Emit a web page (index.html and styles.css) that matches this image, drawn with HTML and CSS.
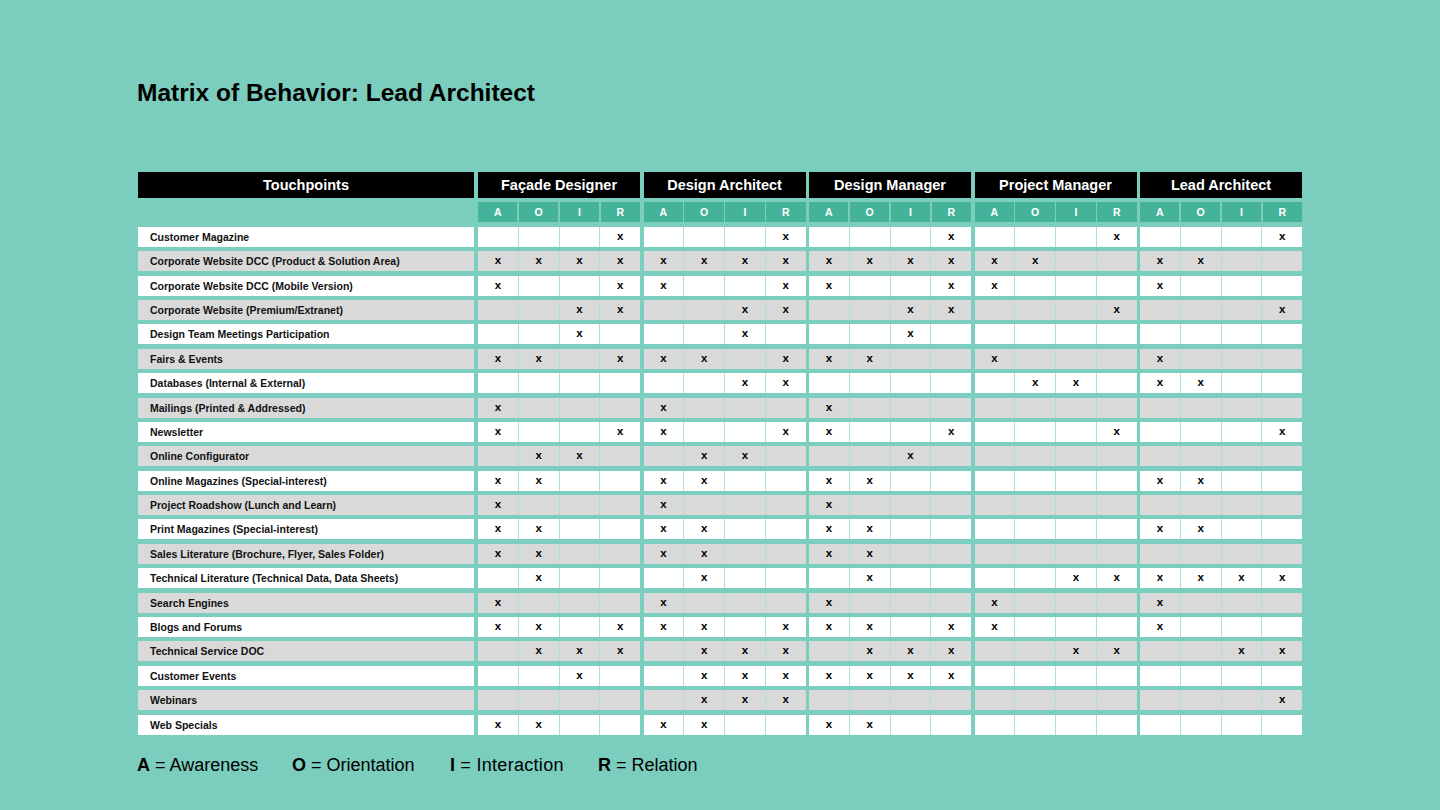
FILE: index.html
```html
<!DOCTYPE html>
<html lang="en">
<head>
<meta charset="utf-8">
<title>Matrix of Behavior: Lead Architect</title>
<link rel="stylesheet" href="styles.css">
</head>
<body>
<main class="page">
  <h1 class="title">Matrix of Behavior: Lead Architect</h1>
  <div class="matrix">
    <div class="row head">
      <div class="label">Touchpoints</div>
      <div class="group">Façade Designer</div>
      <div class="group">Design Architect</div>
      <div class="group">Design Manager</div>
      <div class="group">Project Manager</div>
      <div class="group">Lead Architect</div>
    </div>
    <div class="row sub">
      <div class="label"></div>
      <div class="group"><span>A</span><span>O</span><span>I</span><span>R</span></div>
      <div class="group"><span>A</span><span>O</span><span>I</span><span>R</span></div>
      <div class="group"><span>A</span><span>O</span><span>I</span><span>R</span></div>
      <div class="group"><span>A</span><span>O</span><span>I</span><span>R</span></div>
      <div class="group"><span>A</span><span>O</span><span>I</span><span>R</span></div>
    </div>
    <div class="row">
      <div class="label">Customer Magazine</div>
      <div class="group"><span></span><span></span><span></span><span>x</span></div>
      <div class="group"><span></span><span></span><span></span><span>x</span></div>
      <div class="group"><span></span><span></span><span></span><span>x</span></div>
      <div class="group"><span></span><span></span><span></span><span>x</span></div>
      <div class="group"><span></span><span></span><span></span><span>x</span></div>
    </div>
    <div class="row alt">
      <div class="label">Corporate Website DCC (Product &amp; Solution Area)</div>
      <div class="group"><span>x</span><span>x</span><span>x</span><span>x</span></div>
      <div class="group"><span>x</span><span>x</span><span>x</span><span>x</span></div>
      <div class="group"><span>x</span><span>x</span><span>x</span><span>x</span></div>
      <div class="group"><span>x</span><span>x</span><span></span><span></span></div>
      <div class="group"><span>x</span><span>x</span><span></span><span></span></div>
    </div>
    <div class="row">
      <div class="label">Corporate Website DCC (Mobile Version)</div>
      <div class="group"><span>x</span><span></span><span></span><span>x</span></div>
      <div class="group"><span>x</span><span></span><span></span><span>x</span></div>
      <div class="group"><span>x</span><span></span><span></span><span>x</span></div>
      <div class="group"><span>x</span><span></span><span></span><span></span></div>
      <div class="group"><span>x</span><span></span><span></span><span></span></div>
    </div>
    <div class="row alt">
      <div class="label">Corporate Website (Premium/Extranet)</div>
      <div class="group"><span></span><span></span><span>x</span><span>x</span></div>
      <div class="group"><span></span><span></span><span>x</span><span>x</span></div>
      <div class="group"><span></span><span></span><span>x</span><span>x</span></div>
      <div class="group"><span></span><span></span><span></span><span>x</span></div>
      <div class="group"><span></span><span></span><span></span><span>x</span></div>
    </div>
    <div class="row">
      <div class="label">Design Team Meetings Participation</div>
      <div class="group"><span></span><span></span><span>x</span><span></span></div>
      <div class="group"><span></span><span></span><span>x</span><span></span></div>
      <div class="group"><span></span><span></span><span>x</span><span></span></div>
      <div class="group"><span></span><span></span><span></span><span></span></div>
      <div class="group"><span></span><span></span><span></span><span></span></div>
    </div>
    <div class="row alt">
      <div class="label">Fairs &amp; Events</div>
      <div class="group"><span>x</span><span>x</span><span></span><span>x</span></div>
      <div class="group"><span>x</span><span>x</span><span></span><span>x</span></div>
      <div class="group"><span>x</span><span>x</span><span></span><span></span></div>
      <div class="group"><span>x</span><span></span><span></span><span></span></div>
      <div class="group"><span>x</span><span></span><span></span><span></span></div>
    </div>
    <div class="row">
      <div class="label">Databases (Internal &amp; External)</div>
      <div class="group"><span></span><span></span><span></span><span></span></div>
      <div class="group"><span></span><span></span><span>x</span><span>x</span></div>
      <div class="group"><span></span><span></span><span></span><span></span></div>
      <div class="group"><span></span><span>x</span><span>x</span><span></span></div>
      <div class="group"><span>x</span><span>x</span><span></span><span></span></div>
    </div>
    <div class="row alt">
      <div class="label">Mailings (Printed &amp; Addressed)</div>
      <div class="group"><span>x</span><span></span><span></span><span></span></div>
      <div class="group"><span>x</span><span></span><span></span><span></span></div>
      <div class="group"><span>x</span><span></span><span></span><span></span></div>
      <div class="group"><span></span><span></span><span></span><span></span></div>
      <div class="group"><span></span><span></span><span></span><span></span></div>
    </div>
    <div class="row">
      <div class="label">Newsletter</div>
      <div class="group"><span>x</span><span></span><span></span><span>x</span></div>
      <div class="group"><span>x</span><span></span><span></span><span>x</span></div>
      <div class="group"><span>x</span><span></span><span></span><span>x</span></div>
      <div class="group"><span></span><span></span><span></span><span>x</span></div>
      <div class="group"><span></span><span></span><span></span><span>x</span></div>
    </div>
    <div class="row alt">
      <div class="label">Online Configurator</div>
      <div class="group"><span></span><span>x</span><span>x</span><span></span></div>
      <div class="group"><span></span><span>x</span><span>x</span><span></span></div>
      <div class="group"><span></span><span></span><span>x</span><span></span></div>
      <div class="group"><span></span><span></span><span></span><span></span></div>
      <div class="group"><span></span><span></span><span></span><span></span></div>
    </div>
    <div class="row">
      <div class="label">Online Magazines (Special-interest)</div>
      <div class="group"><span>x</span><span>x</span><span></span><span></span></div>
      <div class="group"><span>x</span><span>x</span><span></span><span></span></div>
      <div class="group"><span>x</span><span>x</span><span></span><span></span></div>
      <div class="group"><span></span><span></span><span></span><span></span></div>
      <div class="group"><span>x</span><span>x</span><span></span><span></span></div>
    </div>
    <div class="row alt">
      <div class="label">Project Roadshow (Lunch and Learn)</div>
      <div class="group"><span>x</span><span></span><span></span><span></span></div>
      <div class="group"><span>x</span><span></span><span></span><span></span></div>
      <div class="group"><span>x</span><span></span><span></span><span></span></div>
      <div class="group"><span></span><span></span><span></span><span></span></div>
      <div class="group"><span></span><span></span><span></span><span></span></div>
    </div>
    <div class="row">
      <div class="label">Print Magazines (Special-interest)</div>
      <div class="group"><span>x</span><span>x</span><span></span><span></span></div>
      <div class="group"><span>x</span><span>x</span><span></span><span></span></div>
      <div class="group"><span>x</span><span>x</span><span></span><span></span></div>
      <div class="group"><span></span><span></span><span></span><span></span></div>
      <div class="group"><span>x</span><span>x</span><span></span><span></span></div>
    </div>
    <div class="row alt">
      <div class="label">Sales Literature (Brochure, Flyer, Sales Folder)</div>
      <div class="group"><span>x</span><span>x</span><span></span><span></span></div>
      <div class="group"><span>x</span><span>x</span><span></span><span></span></div>
      <div class="group"><span>x</span><span>x</span><span></span><span></span></div>
      <div class="group"><span></span><span></span><span></span><span></span></div>
      <div class="group"><span></span><span></span><span></span><span></span></div>
    </div>
    <div class="row">
      <div class="label">Technical Literature (Technical Data, Data Sheets)</div>
      <div class="group"><span></span><span>x</span><span></span><span></span></div>
      <div class="group"><span></span><span>x</span><span></span><span></span></div>
      <div class="group"><span></span><span>x</span><span></span><span></span></div>
      <div class="group"><span></span><span></span><span>x</span><span>x</span></div>
      <div class="group"><span>x</span><span>x</span><span>x</span><span>x</span></div>
    </div>
    <div class="row alt">
      <div class="label">Search Engines</div>
      <div class="group"><span>x</span><span></span><span></span><span></span></div>
      <div class="group"><span>x</span><span></span><span></span><span></span></div>
      <div class="group"><span>x</span><span></span><span></span><span></span></div>
      <div class="group"><span>x</span><span></span><span></span><span></span></div>
      <div class="group"><span>x</span><span></span><span></span><span></span></div>
    </div>
    <div class="row">
      <div class="label">Blogs and Forums</div>
      <div class="group"><span>x</span><span>x</span><span></span><span>x</span></div>
      <div class="group"><span>x</span><span>x</span><span></span><span>x</span></div>
      <div class="group"><span>x</span><span>x</span><span></span><span>x</span></div>
      <div class="group"><span>x</span><span></span><span></span><span></span></div>
      <div class="group"><span>x</span><span></span><span></span><span></span></div>
    </div>
    <div class="row alt">
      <div class="label">Technical Service DOC</div>
      <div class="group"><span></span><span>x</span><span>x</span><span>x</span></div>
      <div class="group"><span></span><span>x</span><span>x</span><span>x</span></div>
      <div class="group"><span></span><span>x</span><span>x</span><span>x</span></div>
      <div class="group"><span></span><span></span><span>x</span><span>x</span></div>
      <div class="group"><span></span><span></span><span>x</span><span>x</span></div>
    </div>
    <div class="row">
      <div class="label">Customer Events</div>
      <div class="group"><span></span><span></span><span>x</span><span></span></div>
      <div class="group"><span></span><span>x</span><span>x</span><span>x</span></div>
      <div class="group"><span>x</span><span>x</span><span>x</span><span>x</span></div>
      <div class="group"><span></span><span></span><span></span><span></span></div>
      <div class="group"><span></span><span></span><span></span><span></span></div>
    </div>
    <div class="row alt">
      <div class="label">Webinars</div>
      <div class="group"><span></span><span></span><span></span><span></span></div>
      <div class="group"><span></span><span>x</span><span>x</span><span>x</span></div>
      <div class="group"><span></span><span></span><span></span><span></span></div>
      <div class="group"><span></span><span></span><span></span><span></span></div>
      <div class="group"><span></span><span></span><span></span><span>x</span></div>
    </div>
    <div class="row">
      <div class="label">Web Specials</div>
      <div class="group"><span>x</span><span>x</span><span></span><span></span></div>
      <div class="group"><span>x</span><span>x</span><span></span><span></span></div>
      <div class="group"><span>x</span><span>x</span><span></span><span></span></div>
      <div class="group"><span></span><span></span><span></span><span></span></div>
      <div class="group"><span></span><span></span><span></span><span></span></div>
    </div>
  </div>
  <div class="legend">
    <span class="item item-a"><b>A</b> = Awareness</span>
    <span class="item item-o"><b>O</b> = Orientation</span>
    <span class="item item-i"><b>I</b> = Interaction</span>
    <span class="item item-r"><b>R</b> = Relation</span>
  </div>
</main>
</body>
</html>
```

FILE: styles.css
```css
* { box-sizing: border-box; }

html, body {
  margin: 0;
  padding: 0;
}

body {
  background: #7bcebd;
  font-family: "Liberation Sans", Arial, sans-serif;
  color: #000;
  width: 1440px;
  height: 810px;
  overflow: hidden;
}

.page {
  padding: 78px 0 0 138px;
}

.title {
  margin: 0 0 64px -1px;
  font-size: 24.5px;
  line-height: 30px;
  font-weight: 700;
  letter-spacing: 0;
}

.matrix {
  display: flex;
  flex-direction: column;
  gap: 4.4px;
  width: 1164px;
}

.row {
  display: flex;
  height: 20px;
  gap: 3.5px;
}

.row .label {
  flex: 0 0 336px;
  margin-right: 0.5px;
  background: #fff;
  font-size: 10.5px;
  font-weight: 700;
  line-height: 20px;
  padding-left: 12px;
  color: #111;
  white-space: nowrap;
}

.row .group {
  flex: 0 0 162px;
  display: flex;
  gap: 1px;
  background: #aee0d3;
}

.row .group span {
  flex: 1 1 0;
  background: #fff;
  text-align: center;
  font-size: 11.5px;
  font-weight: 700;
  line-height: 19px;
}

.row.alt .label,
.row.alt .group span {
  background: #d9d9d9;
}

.row.head {
  height: 26px;
}

.row.head .label,
.row.head .group {
  background: #000;
  color: #fff;
  font-size: 14.5px;
  font-weight: 700;
  line-height: 26px;
  text-align: center;
  padding: 0;
  display: block;
}

.row.sub .label {
  background: transparent;
}

.row.sub .group {
  background: #7bcebd;
  gap: 1.5px;
}

.row.sub .group span {
  background: #45b39a;
  color: #fff;
  font-size: 10.5px;
  line-height: 20px;
}

.legend {
  display: flex;
  margin-top: 19px;
  margin-left: -1px;
  font-size: 18px;
  line-height: 22px;
  color: #000;
  white-space: nowrap;
}

.legend .item-a { flex: 0 0 155px; }
.legend .item-o { flex: 0 0 158px; }
.legend .item-i { flex: 0 0 148px; letter-spacing: 0.3px; }
.legend .item-r { flex: 0 0 auto; }

.legend b {
  font-weight: 900;
  letter-spacing: 0;
}
```
